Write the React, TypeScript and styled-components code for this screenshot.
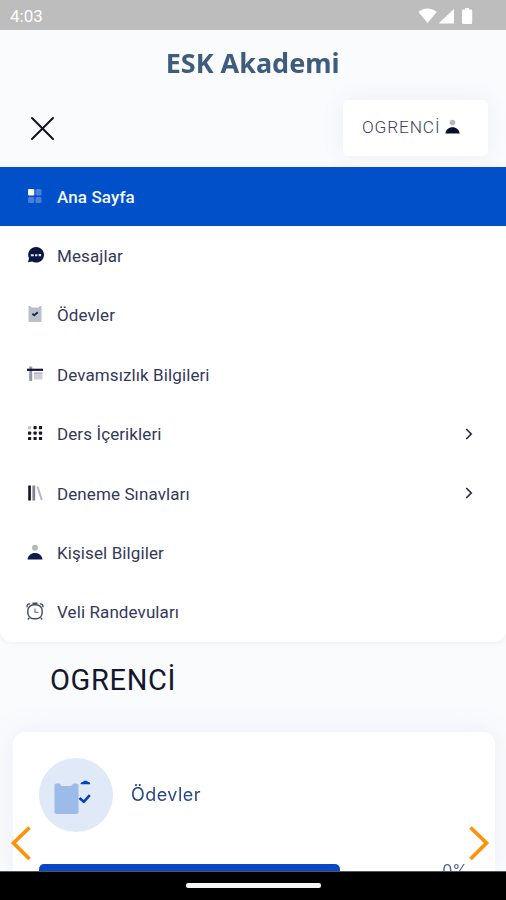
import React from "react";
import styled, { createGlobalStyle } from "styled-components";

const GlobalStyle = createGlobalStyle`
  * { box-sizing: border-box; }
  body { margin: 0; background: #fafbfd; font-family: Roboto, sans-serif; }
`;

const Screen = styled.div`
  position: relative;
  width: 506px;
  height: 900px;
  overflow: hidden;
  display: flex;
  flex-direction: column;
  background: #fafbfd;
`;

const StatusBar = styled.header`
  flex: 0 0 30px;
  display: flex;
  align-items: center;
  justify-content: space-between;
  padding: 2px 33px 0 10px;
  background: #bdbdbd;
  color: #fff;
  font-size: 17px;
`;

const Brand = styled.div`
  flex: 0 0 66px;
  display: flex;
  align-items: center;
  justify-content: center;
`;

const BrandName = styled.span`
  display: inline-block;
  white-space: nowrap;
  transform: scaleX(0.98);
  font: 700 27.5px/1 "Noto Sans", sans-serif;
  color: #3f5c7c;
`;

const Toolbar = styled.div`
  flex: 0 0 70.5px;
  display: flex;
  align-items: flex-start;
  justify-content: space-between;
  padding: 4px 18px 0 30px;
`;

const CloseButton = styled.button`
  display: flex;
  margin: 16px 0 0;
  padding: 0;
  border: 0;
  background: none;
`;

const UserButton = styled.button`
  display: flex;
  align-items: center;
  width: 145px;
  height: 56px;
  padding: 0 0 0 19px;
  border: 0;
  border-radius: 5px;
  background: #fff;
  box-shadow: 0 0 24px rgba(60, 70, 110, 0.07);
  color: #3c3f58;
  font: 300 17.3px/1 Roboto, sans-serif;
  letter-spacing: 0.85px;
  svg { margin: -4px 0 0 4px; }
`;

const Menu = styled.nav`
  position: relative;
  flex: 0 0 475px;
  display: flex;
  flex-direction: column;
  background: #fff;
  border-radius: 0 0 12px 12px;
  box-shadow: 0 1px 5px rgba(40, 50, 80, 0.06);
`;

const MenuItem = styled.a<{ $active?: boolean }>`
  flex: 0 0 59.375px;
  display: flex;
  align-items: center;
  padding: 1px 29px 0 26px;
  background: ${(p) => (p.$active ? "#0050ca" : "transparent")};
  color: ${(p) => (p.$active ? "#f2f6ff" : "#33395a")};
  font-size: 17px;
  font-weight: ${(p) => (p.$active ? 500 : 400)};
  letter-spacing: 0.1px;
  > svg:first-child { margin-right: 13px; margin-top: -2px; flex: none; }
  > svg:last-child { margin-left: auto; margin-top: -1px; }
`;

const Heading = styled.h1`
  flex: 0 0 90.5px;
  margin: 0;
  padding: 21px 0 0 50px;
  color: #15152e;
  font: 400 29px/34px Roboto, sans-serif;
  letter-spacing: 0.65px;
`;

const CardShadow = styled.div`
  flex: 0 0 139px;
  min-height: 0;
  filter: drop-shadow(0 0 14px rgba(50, 60, 100, 0.07));
`;

const Card = styled.section`
  height: 139px;
  margin: 0 11px 0 13px;
  padding: 26px 27px 0 26px;
  overflow: hidden;
  border-radius: 12px 12px 0 0;
  background: #fff;
`;

const CardHead = styled.div`
  display: flex;
  align-items: center;
  gap: 18px;
  height: 74px;
  color: #29488c;
  font: 400 18px/1 Inter, sans-serif;
  letter-spacing: 0.45px;
`;

const IconDisc = styled.div`
  width: 74px;
  height: 74px;
  border-radius: 50%;
  background: #e0e9f8;
`;

const Progress = styled.div`
  display: flex;
  justify-content: space-between;
  align-items: flex-start;
  margin-top: 29px;
  color: #53648f;
  font: 400 16px/18px Inter, sans-serif;
`;

const ProgressFill = styled.div`
  width: 301px;
  height: 12px;
  margin-top: 3px;
  border-radius: 5px;
  background: #0848c6;
`;

const NavBar = styled.footer`
  position: relative;
  flex: 1 0 29px;
  display: flex;
  justify-content: center;
  padding-top: 11px;
  border-top: 1px solid #555;
  background: #000;
`;

const HomePill = styled.div`
  width: 135px;
  height: 5px;
  border-radius: 2px;
  background: #f4f4f4;
`;

const Arrow = styled.button<{ $side: "left" | "right" }>`
  position: absolute;
  top: 824px;
  ${(p) => (p.$side === "left" ? "left: 9px" : "right: 15px")};
  display: flex;
  padding: 0;
  border: 0;
  background: none;
`;

const navy = "#101b4d";

const UserIcon = ({ dark = navy, size = 18 }: { dark?: string; size?: number }) => (
  <svg width={size} height={size} viewBox="0 0 18 18">
    <circle cx="9" cy="4.8" r="3" fill="#b6b8c0" />
    <path d="M1.500 16.500C2 12.300 5 9.900 9 9.900s7 2.400 7.500 6.600z" fill={dark} />
  </svg>
);

const HomeIcon = () => (
  <svg width="18" height="18" viewBox="0 0 18 18">
    <rect x="2" y="2" width="6.3" height="6.5" rx="1" fill="#fff" />
    <rect x="9.5" y="2" width="6" height="6.5" rx="1.5" fill="#4a80dc" />
    <rect x="2" y="10" width="6.3" height="6" rx="1.5" fill="#4a80dc" />
    <rect x="9.5" y="10" width="6" height="6" rx="1.5" fill="#4a80dc" />
  </svg>
);

const MessageIcon = () => (
  <svg width="18" height="18" viewBox="0 0 18 18">
    <path d="M10 1a7.8 7.8 0 1 1-3.8 14.5L2 16.3l1-4A7.8 7.8 0 0 1 10 1z" fill="#0d1640" />
    <path d="M4.8 8.2h3v2h-3zM9 8.2h2.3v2H9zM12.6 8h2.5v2.2h-2.5z" fill="#dfe2f0" />
  </svg>
);

const TaskIcon = () => (
  <svg width="18" height="18" viewBox="0 0 18 18">
    <path d="M2.5 1h2l1 1.5h7L13.5 1h2v16h-13z" fill="#b9c0cc" />
    <path d="m6.3 8.8 2 1.5 3.5-3" fill="none" stroke="#20294e" strokeWidth="1.9" />
  </svg>
);

const AbsenceIcon = () => (
  <svg width="18" height="18" viewBox="0 0 18 18">
    <path d="M3.2 1.5h3V16h-3z" fill="#9698a8" />
    <path d="M8 8h8.5v6.5H8z" fill="#cfd0d8" />
    <path d="M8 8h8.5" stroke="#9b9dab" />
    <path d="M1 4.8h16" stroke="#101334" strokeWidth="2.2" />
  </svg>
);

const GridIcon = () => (
  <svg width="18" height="18" viewBox="0 0 18 18">
    {[3.5, 9, 14.4].map((y) =>
      [3.5, 9, 14.4].map((x) => (
        <rect
          key={`${x}-${y}`}
          x={x - 1.5}
          y={y - 1.5}
          width="3.2"
          height="3.2"
          rx=".7"
          fill={x === 3.5 && y === 3.5 ? "#c4c4cc" : "#15152b"}
        />
      ))
    )}
  </svg>
);

const BooksIcon = () => (
  <svg width="18" height="18" viewBox="0 0 18 18">
    <path d="M2.2 1.5h2.7v15H2.2z" fill="#15162a" />
    <path d="M6.4 1.5h2.8v15H6.4z" fill="#82838f" />
    <path d="m11.5 2.500 4.300 13.500" stroke="#b7b9c2" strokeWidth="2" />
  </svg>
);

const ClockIcon = () => (
  <svg width="18" height="20" viewBox="0 0 18 20" fill="none" stroke="#424961" strokeWidth="1.4">
    <rect x="1.800" y="3.800" width="14.400" height="14" rx="6" />
    <path d="M1.300 6.200c-.8-2 .6-3.900 2.800-3.200M16.700 6.200c.8-2-.6-3.900-2.800-3.200M6.500 2.300h5M9 1.500v2M3.200 16.900l-1.500 1.500M14.800 16.900l1.500 1.500" />
    <path d="M9 7.500v3.900h3.400" strokeWidth="1.2" stroke="#777d90" />
  </svg>
);

const Chevron = () => (
  <svg width="16" height="16" viewBox="0 0 16 16">
    <path d="m5.2 3 5 5-5 5" fill="none" stroke="#2a2b3c" strokeWidth="1.7" />
  </svg>
);

const StatusIcons = () => (
  <svg width="55" height="20" viewBox="418 5 55 20" fill="#fff">
    <path d="M418.500 11c2.600-2.300 5.600-3.500 9-3.500s6.600 1.200 9.200 3.500L427.600 22z" />
    <path d="M454 8v14.500h-15.500z" />
    <path d="M465 7h4v1.500h1.800c.9 0 1.400.6 1.400 1.400V21.500c0 .9-.5 1.500-1.400 1.500h-7.400c-.9 0-1.400-.6-1.400-1.500V9.900c0-.8.5-1.400 1.400-1.400H465z" />
  </svg>
);

const CardIcon = () => (
  <svg width="74" height="74" viewBox="0 0 74 74">
    <path
      d="M17.500 25.500h3l2 2.500h9.500l2.500-2.500h3c1.200 0 2 .8 2 2v26.500c0 1.300-.8 2-2 2h-20c-1.300 0-2-.7-2-2V27.500c0-1.200.7-2 2-2z"
      fill="#9cbbe8"
    />
    <path d="M41.500 26.300c0-1.700 1-2.300 2.600-2.300.2-1.800 4.600-1.800 4.800 0 1.600 0 2.300.6 2.300 2.300z" fill="#0a3fc0" />
    <path d="m40.500 40 4.300 3.800 6-6.600" fill="none" stroke="#0a3fc0" strokeWidth="2.600" strokeLinejoin="round" />
  </svg>
);

const items = [
  { label: "Ana Sayfa", icon: <HomeIcon />, active: true },
  { label: "Mesajlar", icon: <MessageIcon /> },
  { label: "Ödevler", icon: <TaskIcon /> },
  { label: "Devamsızlık Bilgileri", icon: <AbsenceIcon /> },
  { label: "Ders İçerikleri", icon: <GridIcon />, expandable: true },
  { label: "Deneme Sınavları", icon: <BooksIcon />, expandable: true },
  { label: "Kişisel Bilgiler", icon: <UserIcon /> },
  { label: "Veli Randevuları", icon: <ClockIcon /> },
];

export default function App() {
  return (
    <>
      <GlobalStyle />
      <Screen>
        <StatusBar>
          <span>4:03</span>
          <StatusIcons />
        </StatusBar>
        <Brand>
          <BrandName>ESK Akademi</BrandName>
        </Brand>
        <Toolbar>
          <CloseButton aria-label="Kapat">
            <svg width="25" height="25" viewBox="0 0 25 25">
              <path d="m2 2 21 21M23 2 2 23" stroke="#11111f" strokeWidth="2" strokeLinecap="round" />
            </svg>
          </CloseButton>
          <UserButton>
            OGRENCİ <UserIcon dark="#0a0e2b" size={17} />
          </UserButton>
        </Toolbar>
        <Menu>
          {items.map((item) => (
            <MenuItem key={item.label} $active={item.active}>
              {item.icon}
              <span>{item.label}</span>
              {item.expandable && <Chevron />}
            </MenuItem>
          ))}
        </Menu>
        <Heading>OGRENCİ</Heading>
        <CardShadow>
          <Card>
            <CardHead>
              <IconDisc>
                <CardIcon />
              </IconDisc>
              <span>Ödevler</span>
            </CardHead>
            <Progress>
              <ProgressFill />
              <span>0%</span>
            </Progress>
          </Card>
        </CardShadow>
        <NavBar>
          <HomePill />
        </NavBar>
        <Arrow $side="left" aria-label="Önceki">
          <svg width="24" height="38" viewBox="0 0 24 38">
            <path d="M20.500 3.500 4.500 19l16 16" fill="none" stroke="#ff920a" strokeWidth="3.800" />
          </svg>
        </Arrow>
        <Arrow $side="right" aria-label="Sonraki">
          <svg width="24" height="38" viewBox="0 0 24 38">
            <path d="m3.500 3.500 16 15.500-16 16" fill="none" stroke="#ff920a" strokeWidth="3.800" />
          </svg>
        </Arrow>
      </Screen>
    </>
  );
}
